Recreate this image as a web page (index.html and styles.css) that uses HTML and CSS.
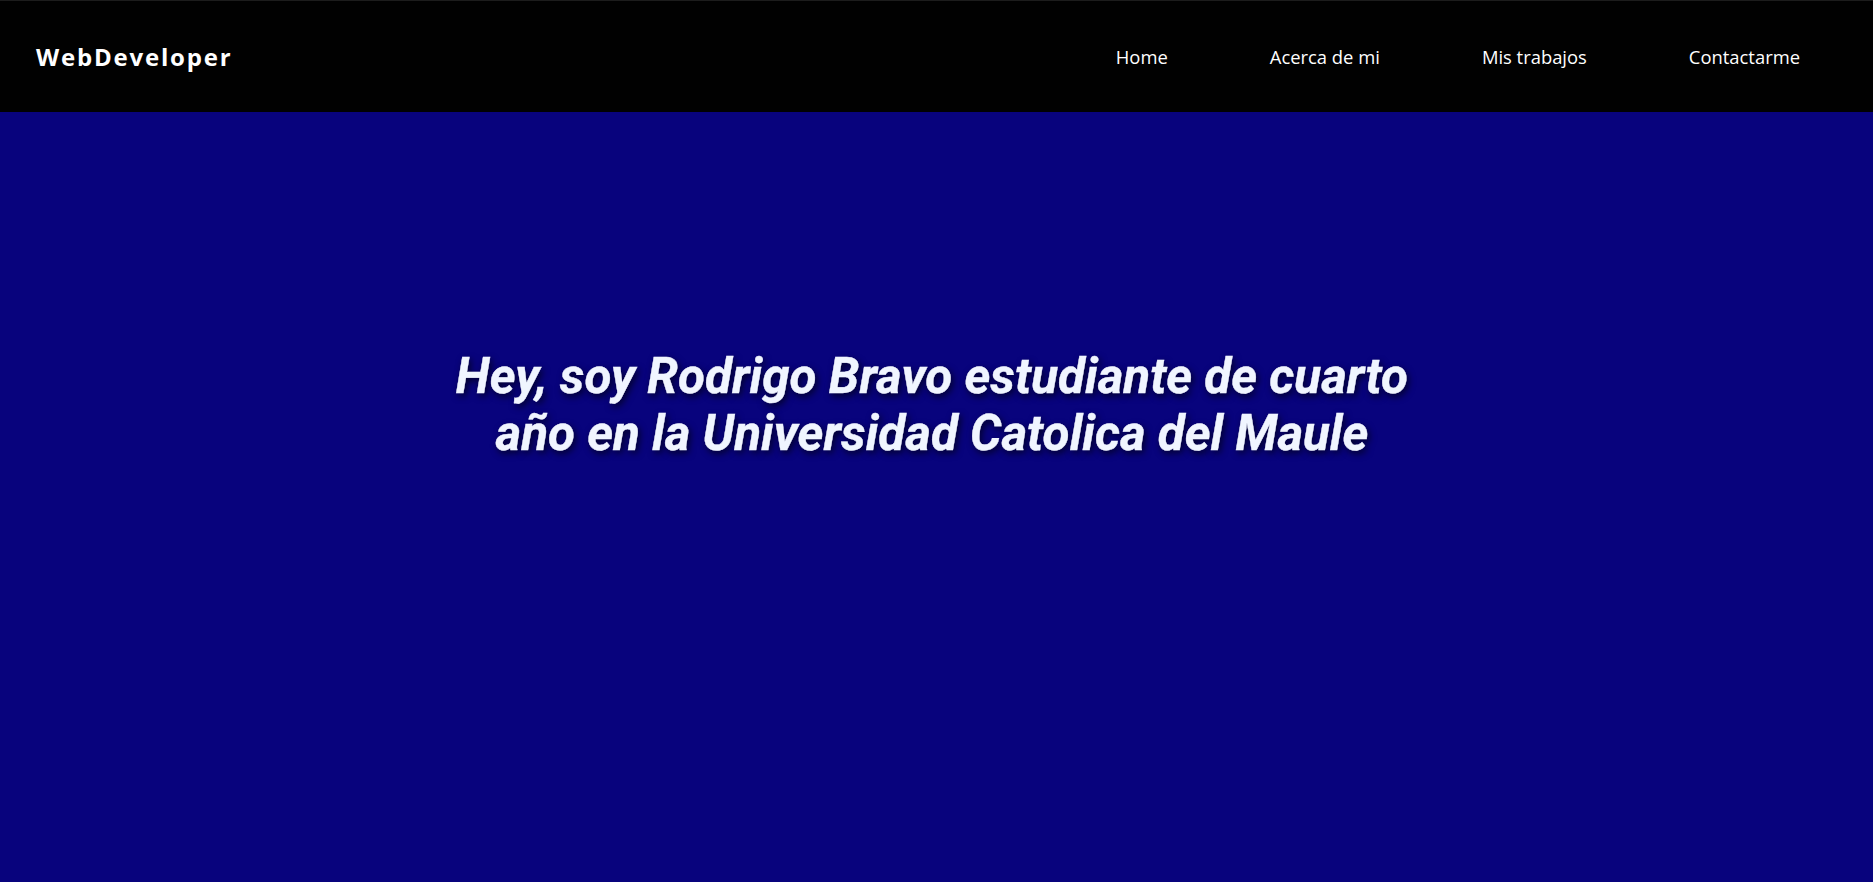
FILE: index.html
```
<!DOCTYPE html>
<html lang="es">
<head>
<meta charset="utf-8">
<title>WebDeveloper</title>
<link rel="stylesheet" href="styles.css">
</head>
<body>
<header class="header">
  <div class="logo">WebDeveloper</div>
  <nav>
    <ul class="nav-list">
      <li><a href="#">Home</a></li>
      <li><a href="#">Acerca de mi</a></li>
      <li><a href="#">Mis trabajos</a></li>
      <li><a href="#">Contactarme</a></li>
    </ul>
  </nav>
</header>
<section class="hero">
  <h1 class="hero-title">Hey, soy Rodrigo Bravo estudiante de cuarto año en la Universidad Catolica del Maule</h1>
</section>
</body>
</html>
```
FILE: styles.css
```
* { box-sizing: border-box; }
html, body { margin: 0; padding: 0; height: 100%; }
body {
  background: #08037d;
  font-family: "Open Sans", "Noto Sans", sans-serif;
  overflow: hidden;
}
.header {
  height: 112px;
  background: #010101;
  border-top: 1px solid #1c1c1c;
  display: flex;
  align-items: center;
  justify-content: space-between;
  padding: 0 73px 0 36px;
}
.logo {
  color: #fff;
  font-weight: 700;
  font-size: 24px;
  letter-spacing: 1.8px;
  margin-top: -1px;
}
.nav-list {
  list-style: none;
  margin: 0;
  padding: 0;
  display: flex;
  gap: 102px;
}
.nav-list a {
  color: #fff;
  text-decoration: none;
  font-size: 18.4px;
}
.hero {
  padding-top: 236px;
  padding-right: 9px;
  display: flex;
  justify-content: center;
}
.hero-title {
  margin: 0;
  width: 1010px;
  text-align: center;
  font-family: Roboto, sans-serif;
  font-style: italic;
  font-weight: 700;
  font-size: 49.4px;
  line-height: 57px;
  color: #f0f5ff;
  text-shadow: 2px 3px 7px rgba(0, 0, 0, 0.7);
  -webkit-text-stroke: 0.4px #f0f5ff;
}
```
